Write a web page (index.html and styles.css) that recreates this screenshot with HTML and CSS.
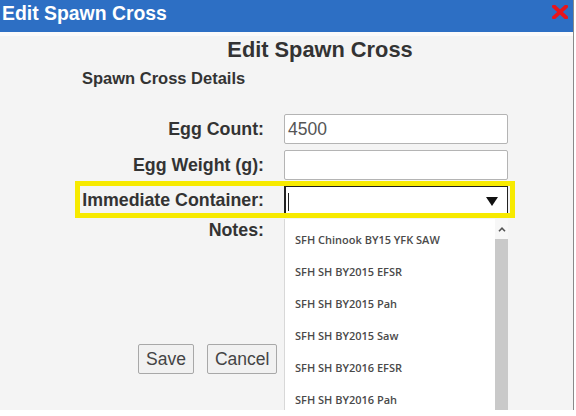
FILE: index.html
```html
<!DOCTYPE html>
<html>
<head>
<meta charset="utf-8">
<link rel="stylesheet" href="styles.css">
</head>
<body>
<div class="dialog">
  <div class="titlebar">
    <span class="title">Edit Spawn Cross</span>
    <svg class="close" width="16" height="14" viewBox="0 0 16 14"><path d="M2 1.5 L14 12.5 M14 1.5 L2 12.5" stroke="#e8141b" stroke-width="3.8" stroke-linecap="square"/></svg>
  </div>
  <div class="strip"></div>
  <div class="content">
    <h1 class="heading">Edit Spawn Cross</h1>
    <h2 class="subheading">Spawn Cross Details</h2>
    <div class="form">
      <label class="label">Egg Count:</label>
      <div class="input">4500</div>
      <label class="label">Egg Weight (g):</label>
      <div class="input"></div>
      <label class="label">Immediate Container:</label>
      <div class="select">
        <span class="caret"></span>
        <svg class="arrow" width="12" height="9" viewBox="0 0 12 9"><path d="M0 0 H12 L6 9 Z" fill="#111"/></svg>
      </div>
      <label class="label label-top">Notes:</label>
      <div class="textarea"></div>
      <div class="highlight"></div>
      <div class="dropdown">
        <ul class="options">
          <li>SFH Chinook BY15 YFK SAW</li>
          <li>SFH SH BY2015 EFSR</li>
          <li>SFH SH BY2015 Pah</li>
          <li>SFH SH BY2015 Saw</li>
          <li>SFH SH BY2016 EFSR</li>
          <li>SFH SH BY2016 Pah</li>
        </ul>
        <div class="scrollbar">
          <div class="scroll-up"><svg width="8" height="5" viewBox="0 0 8 5"><path d="M1 4.2 L4 1.2 L7 4.2" fill="none" stroke="#555" stroke-width="1.6"/></svg></div>
          <div class="thumb"></div>
        </div>
      </div>
    </div>
    <div class="buttons">
      <button class="btn">Save</button>
      <button class="btn">Cancel</button>
    </div>
  </div>
</div>
</body>
</html>
```
FILE: styles.css
```css
* { box-sizing: border-box; }
html, body { margin: 0; padding: 0; background: #ffffff; }
body { font-family: "Liberation Sans", Arial, sans-serif; color: #333; }

.dialog {
  width: 574px;
  height: 410px;
  background: #f4f4f4;
  border-right: 1px solid #8a8a8a;
  overflow: hidden;
}

.titlebar {
  height: 32px;
  background: #2d6fc4;
  color: #fff;
  display: flex;
  justify-content: space-between;
  align-items: flex-start;
  padding: 2px 5px 0 2px;
}
.title { font-weight: bold; font-size: 19.4px; line-height: 22px; }
.close { margin-top: 3px; }

.strip { height: 4px; background: #fbfafa; }

.content { position: relative; }

.heading {
  margin: 2px 0 0 0;
  padding-left: 67px;
  text-align: center;
  font-size: 21.8px;
  line-height: 24px;
  font-weight: bold;
  color: #333;
}
.subheading {
  margin: 7px 0 0 82px;
  font-size: 16.5px;
  line-height: 19px;
  font-weight: bold;
  color: #333;
}

.form {
  position: relative;
  margin-top: 26px;
  display: grid;
  grid-template-columns: 264px 224px;
  column-gap: 20px;
  row-gap: 6px;
  align-items: center;
}
.label {
  text-align: right;
  font-weight: bold;
  font-size: 17.8px;
  line-height: 20px;
  color: #333;
}
.label-top { align-self: start; }

.input {
  height: 30px;
  background: #fff;
  border: 1px solid #b4b4b4;
  border-radius: 2px;
  font-size: 17.5px;
  line-height: 28px;
  padding-left: 3px;
  color: #555;
}
.select {
  height: 28px;
  background: #fff;
  border: 1px solid #222;
  border-left-width: 2px;
  display: flex;
  align-items: center;
  justify-content: space-between;
  padding: 0 9px 0 2px;
}
.caret { width: 1px; height: 18px; background: #222; margin-top: 4px; }
.arrow { margin-top: 3px; }

.textarea {
  height: 100px;
  background: #fff;
  border: 1px solid #b4b4b4;
}

.highlight {
  position: absolute;
  left: 75px;
  top: 67px;
  width: 440px;
  height: 37px;
  border: 5px solid #f7ea00;
  pointer-events: none;
}

.dropdown {
  position: absolute;
  left: 284px;
  top: 105px;
  width: 224px;
  height: 192px;
  background: #fff;
  border-left: 1px solid #d8d8d8;
  display: flex;
}
.options {
  flex: 1;
  list-style: none;
  margin: 0;
  padding: 5px 0 0 10px;
}
.options li {
  height: 32px;
  line-height: 32px;
  font-family: "Open Sans", "Noto Sans", sans-serif;
  font-size: 11px;
  font-weight: 600;
  color: #4a4a4a;
  white-space: nowrap;
}
.scrollbar {
  width: 13px;
  display: flex;
  flex-direction: column;
  background: #f0f0f0;
}
.scroll-up {
  height: 20px;
  display: flex;
  justify-content: center;
  align-items: center;
  background: #f7f7f7;
}
.thumb { flex: 1; background: #c9c9c9; }

.buttons {
  margin: 24px 0 0 138px;
  display: flex;
  gap: 13px;
}
.btn {
  height: 30px;
  padding: 0 7px;
  font-family: "Liberation Sans", Arial, sans-serif;
  font-size: 17.5px;
  color: #444;
  background: #f1f1f1;
  border: 1px solid #a8a8a8;
  border-radius: 2px;
}
```
